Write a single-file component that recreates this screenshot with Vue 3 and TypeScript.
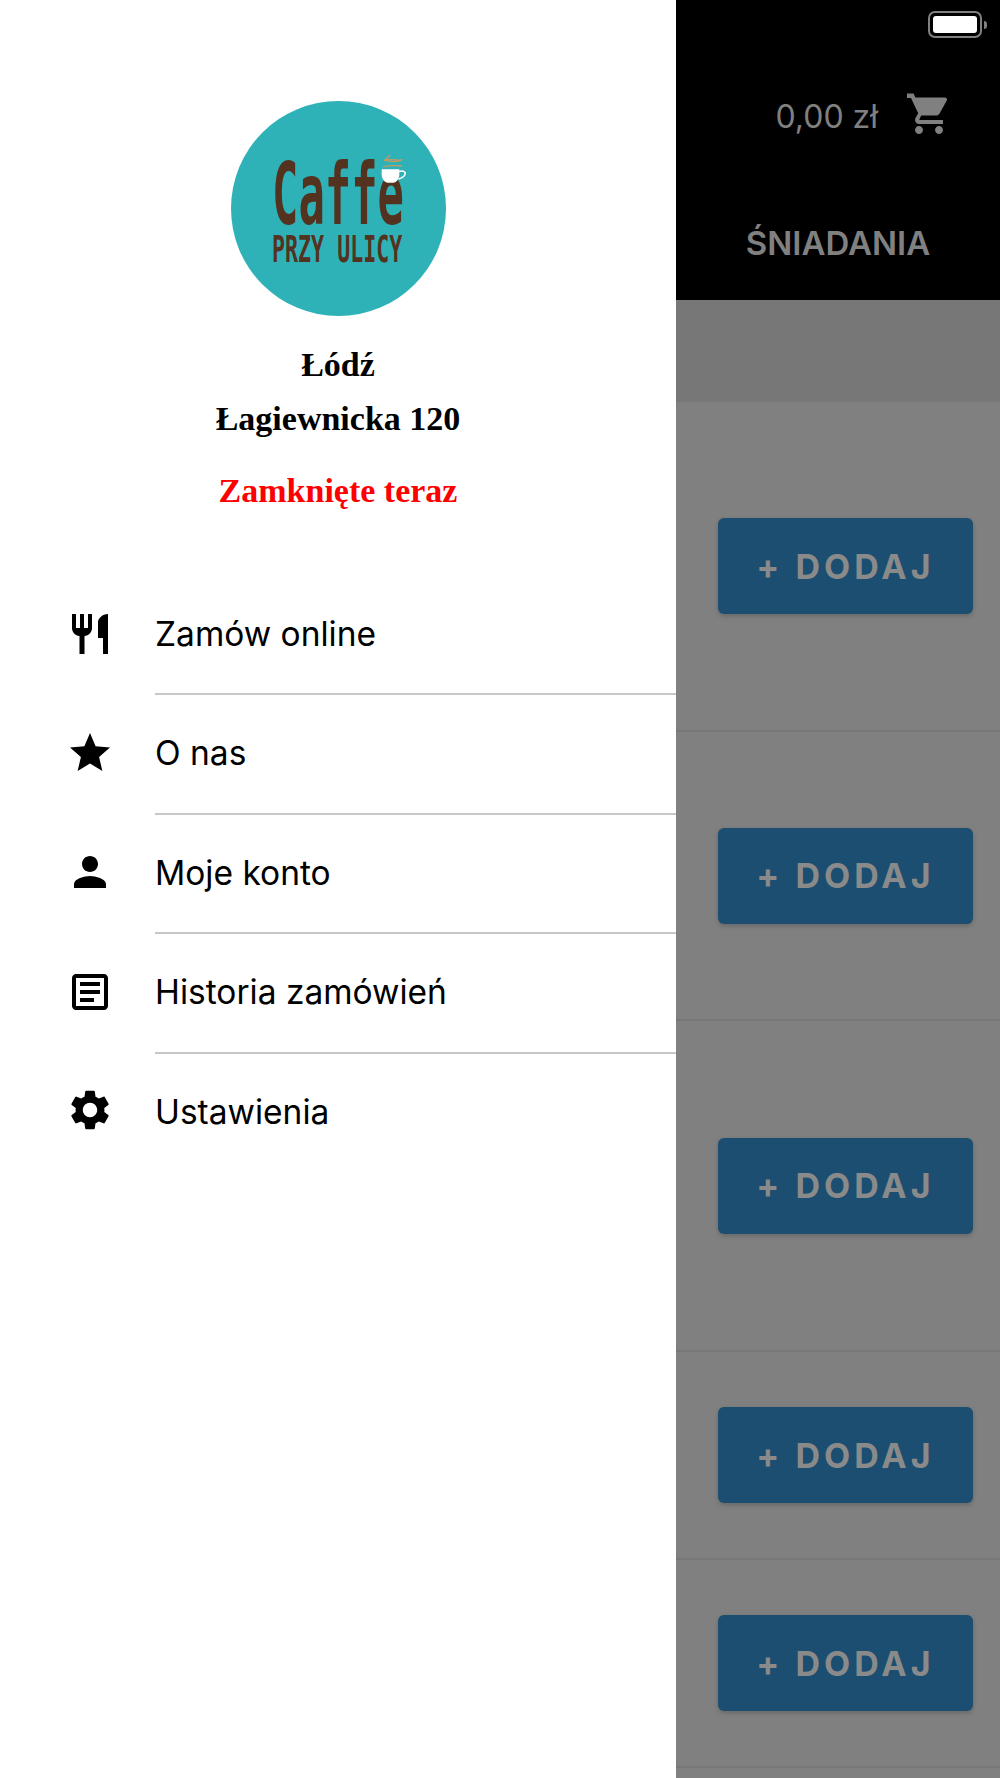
<template>
  <div class="screen">
    <aside class="drawer">
      <svg class="logo" viewBox="0 0 215 215" width="215" height="215">
        <circle cx="107.5" cy="107.5" r="107.5" fill="#2eb2b8" />
        <text class="logo-main" transform="translate(41 123) scale(0.51 1)">Caffe</text>
        <text class="logo-sub" transform="translate(41 161) scale(0.585 1)">PRZY ULICY</text>
        <path d="M150.7 68.3h17.6v5c0 5-3 8.4-6 8.4h-5.6c-3 0-6-3.4-6-8.4z" fill="#fff" />
        <path d="M168 70.5c4.500-1.300 7 .5 6 3s-3 3.500-6.500 4.500" fill="none" stroke="#fff" stroke-width="1.5" />
        <path
          d="M152 66c5-1.500 13-1.500 19-1M153 59.500c3-2 14 0 17-.5c-3 2.500-13 1.500-16 .5c0-2 4-3 5-6"
          fill="none"
          stroke="#c79a5e"
          stroke-width="1.3"
        />
      </svg>
      <div class="city">Łódź</div>
      <div class="street">Łagiewnicka 120</div>
      <div class="status">Zamknięte teraz</div>

      <nav class="menu">
        <div v-for="item in menu" :key="item.label" class="menu-row">
          <svg class="menu-icon" viewBox="0 0 24 24" width="48" height="48">
            <path :d="item.icon" fill="#000" />
          </svg>
          <div class="menu-label">{{ item.label }}</div>
        </div>
      </nav>
    </aside>

    <main class="content">
      <header class="top">
        <div class="battery">
          <div class="battery-body"><div class="battery-fill"></div></div>
          <div class="battery-nub"></div>
        </div>
        <div class="cart">
          <span class="price">0,00 zł</span>
          <svg viewBox="0 0 24 24" width="48" height="48">
            <path :d="cartIcon" fill="#808080" />
          </svg>
        </div>
        <div class="tab">ŚNIADANIA</div>
      </header>
      <div class="strip"></div>
      <div v-for="(h, i) in rows" :key="i" class="row" :style="{ height: h + 'px' }">
        <button class="add">+ DODAJ</button>
      </div>
    </main>
  </div>
</template>

<script setup lang="ts">
const cartIcon =
  'M7 18c-1.1 0-1.99.9-1.99 2S5.9 22 7 22s2-.9 2-2-.9-2-2-2zM1 2v2h2l3.6 7.59-1.35 2.45c-.16.28-.25.61-.25.96 0 1.1.9 2 2 2h12v-2H7.42c-.14 0-.25-.11-.25-.25l.03-.12.9-1.83h7.45c.75 0 1.41-.41 1.75-1.03l3.58-6.49c.08-.14.12-.31.12-.48 0-.55-.45-1-1-1H5.21l-.94-2H1zm16 16c-1.1 0-1.99.9-1.99 2s.89 2 1.99 2 2-.9 2-2-.9-2-2-2z'

const menu = [
  {
    label: 'Zamów online',
    icon: 'M11 9H9V2H7v7H5V2H3v7c0 2.12 1.66 3.84 3.75 3.97V22h2.5v-9.03C11.34 12.84 13 11.12 13 9V2h-2v7zm5-3v8h2.5v8H21V2c-2.76 0-5 2.24-5 4z',
  },
  {
    label: 'O nas',
    icon: 'M12 17.27L18.18 21l-1.64-7.03L22 9.24l-7.19-.61L12 2 9.19 8.63 2 9.24l5.46 4.73L5.82 21z',
  },
  {
    label: 'Moje konto',
    icon: 'M12 12c2.21 0 4-1.79 4-4s-1.79-4-4-4-4 1.79-4 4 1.79 4 4 4zm0 2c-2.67 0-8 1.34-8 4v2h16v-2c0-2.66-5.33-4-8-4z',
  },
  {
    label: 'Historia zamówień',
    icon: 'M19 5v14H5V5h14m0-2H5c-1.1 0-2 .9-2 2v14c0 1.1.9 2 2 2h14c1.1 0 2-.9 2-2V5c0-1.1-.9-2-2-2zM14 17H7v-2h7v2zm3-4H7v-2h10v2zm0-4H7V7h10v2z',
  },
  {
    label: 'Ustawienia',
    icon: 'M19.14 12.94c.04-.3.06-.61.06-.94 0-.32-.02-.64-.07-.94l2.03-1.58c.18-.14.23-.41.12-.61l-1.92-3.32c-.12-.22-.37-.29-.59-.22l-2.39.96c-.5-.38-1.03-.7-1.62-.94l-.36-2.54c-.04-.24-.24-.41-.48-.41h-3.84c-.24 0-.43.17-.47.41l-.36 2.54c-.59.24-1.13.57-1.62.94l-2.39-.96c-.22-.08-.47 0-.59.22L2.74 8.87c-.12.21-.08.47.12.61l2.03 1.58c-.05.3-.09.63-.09.94s.02.64.07.94l-2.03 1.58c-.18.14-.23.41-.12.61l1.92 3.32c.12.22.37.29.59.22l2.39-.96c.5.38 1.03.7 1.62.94l.36 2.54c.05.24.24.41.48.41h3.84c.24 0 .44-.17.47-.41l.36-2.54c.59-.24 1.13-.56 1.62-.94l2.39.96c.22.08.47 0 .59-.22l1.92-3.32c.12-.22.07-.47-.12-.61l-2.01-1.58zM12 15.6c-1.98 0-3.6-1.62-3.6-3.6s1.62-3.6 3.6-3.6 3.6 1.62 3.6 3.6-1.62 3.6-3.6 3.6z',
  },
]

const rows = [330, 289, 331, 208, 208]
</script>

<style>
html,
body {
  margin: 0;
  background: #fff;
}
</style>

<style scoped>
.screen {
  display: flex;
  width: 1000px;
  height: 1778px;
  overflow: hidden;
  font-family: Inter, 'Liberation Sans', sans-serif;
}

.drawer {
  width: 676px;
  flex-shrink: 0;
  background: #fff;
  display: flex;
  flex-direction: column;
  align-items: center;
  padding-top: 101px;
  box-sizing: border-box;
}

.logo {
  display: block;
  margin-bottom: 22px;
}

.logo-main {
  font-family: 'DejaVu Sans Mono', monospace;
  font-weight: 700;
  font-size: 86px;
  fill: #53331f;
}

.logo-sub {
  font-family: 'DejaVu Sans Mono', monospace;
  font-weight: 700;
  font-size: 37px;
  fill: #53331f;
}

.city,
.street,
.status {
  font-family: 'Liberation Serif', serif;
  font-weight: 700;
  font-size: 34px;
  line-height: 54px;
  color: #000;
}

.status {
  color: #fe0000;
  margin-top: 18px;
  margin-bottom: 58px;
}

.menu {
  width: 100%;
}

.menu-row {
  display: flex;
  align-items: center;
  padding-left: 66px;
  gap: 41px;
}

.menu-icon {
  flex-shrink: 0;
  margin-bottom: 4px;
}

.menu-label {
  flex: 1;
  height: 117.4px;
  line-height: 117.4px;
  border-bottom: 2px solid #c8c8c8;
  font-size: 33.5px;
  color: #000;
}

.menu-row:last-child .menu-label {
  border-bottom: 0;
}

.content {
  flex: 1;
  background: #808080;
}

.top {
  height: 300px;
  background: #000;
  display: flex;
  flex-direction: column;
  align-items: center;
  position: relative;
}

.battery {
  position: absolute;
  top: 11px;
  right: 13px;
  display: flex;
  align-items: center;
  gap: 2px;
}

.battery-body {
  width: 54px;
  height: 27px;
  box-sizing: border-box;
  border: 2px solid #808080;
  border-radius: 7px;
  padding: 3px;
}

.battery-fill {
  height: 100%;
  background: #fff;
  border-radius: 3px;
}

.battery-nub {
  width: 3px;
  height: 8px;
  background: #808080;
  border-radius: 0 3px 3px 0;
}

.cart {
  align-self: stretch;
  display: flex;
  align-items: center;
  justify-content: flex-end;
  gap: 27px;
  padding: 90px 47px 0 0;
}

.price {
  font-size: 32px;
  font-weight: 400;
  color: #808080;
  padding-top: 4px;
}

.tab {
  margin-top: 85px;
  font-size: 33px;
  font-weight: 600;
  color: #808080;
}

.strip {
  height: 102px;
  background: #777;
}

.row {
  box-sizing: border-box;
  display: flex;
  align-items: center;
  justify-content: flex-end;
  padding-right: 27px;
  border-bottom: 2px solid #777;
}

.add {
  width: 255px;
  height: 96px;
  border: 0;
  border-radius: 6px;
  background: #1b4e70;
  color: #8a8a8a;
  font-family: Inter, 'Liberation Sans', sans-serif;
  font-size: 34px;
  font-weight: 700;
  letter-spacing: 4px;
  box-shadow: 0 2px 5px rgba(0, 0, 0, 0.2);
}
</style>
